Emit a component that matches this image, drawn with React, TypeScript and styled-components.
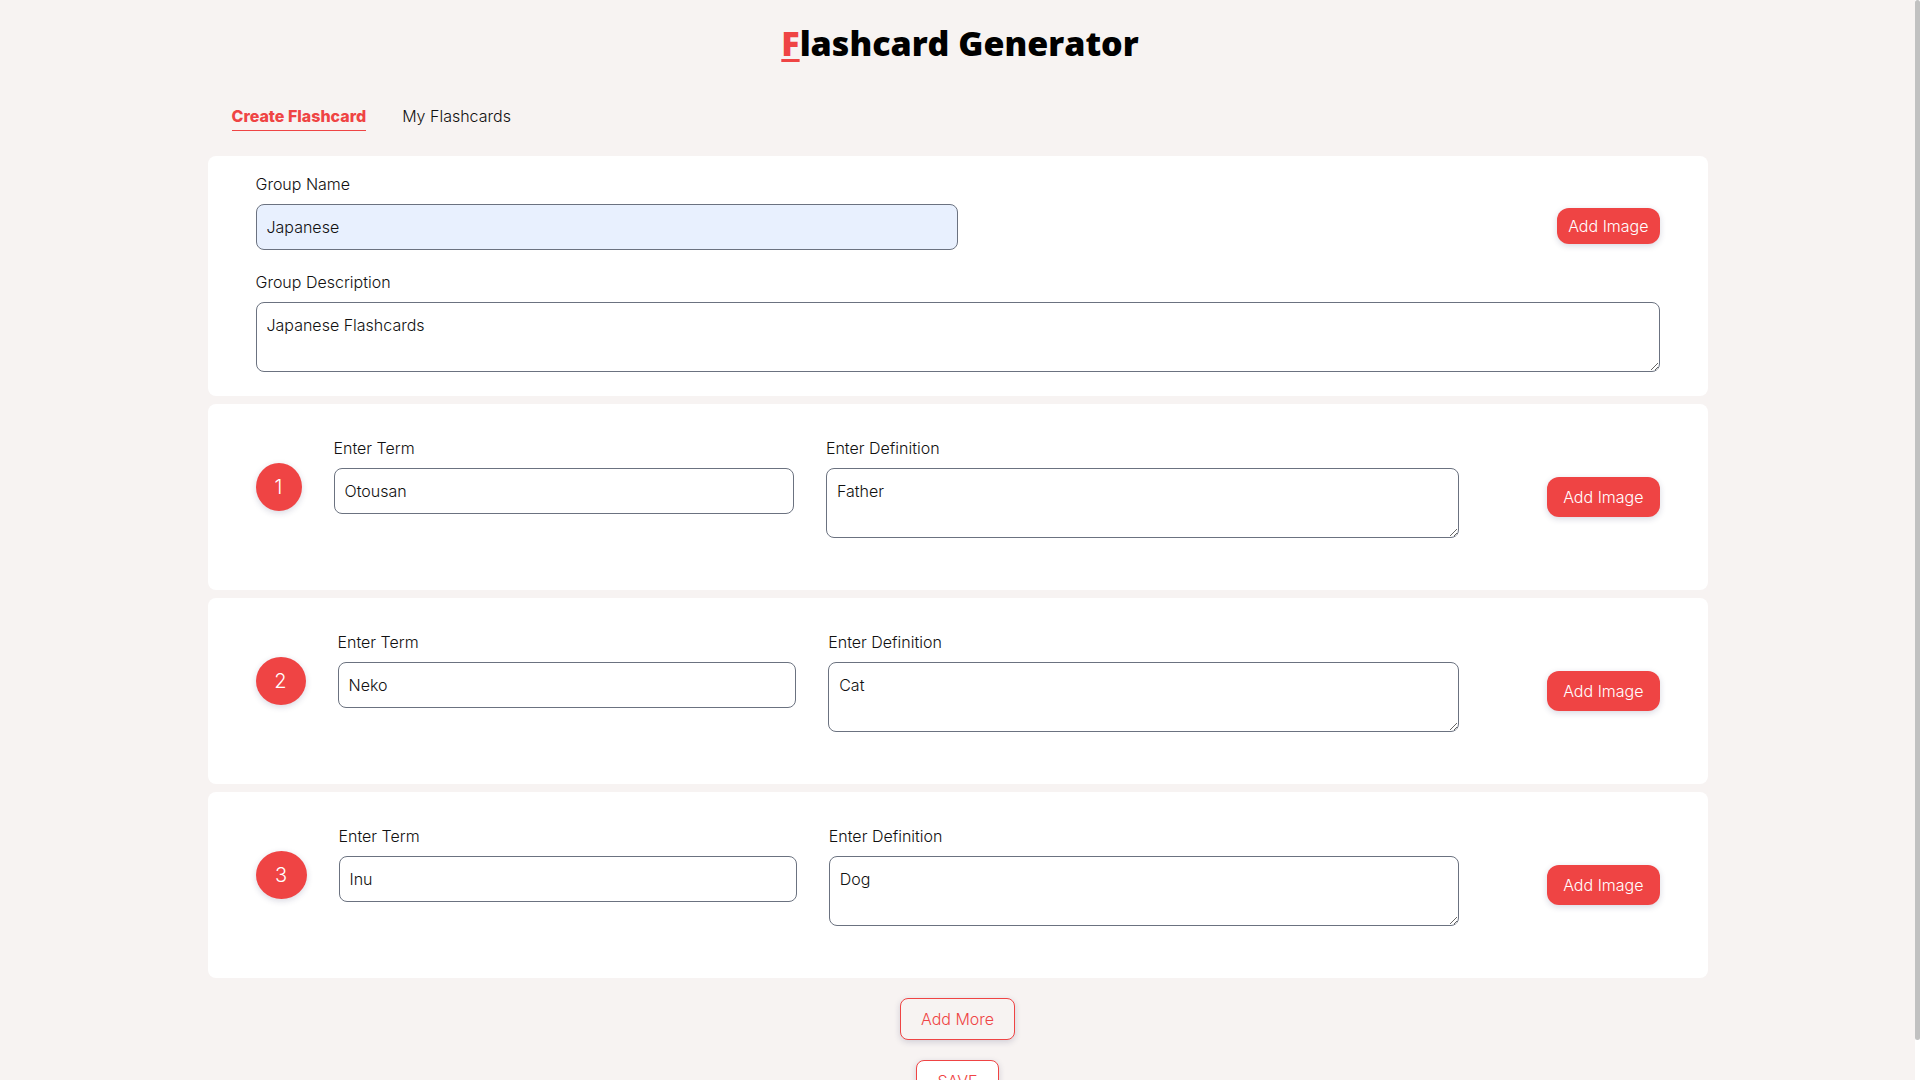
import React, { useEffect, useState } from "react";
import styled, { createGlobalStyle } from "styled-components";

const red = "#ef4444";
const softShadow = "0 2px 6px rgba(40, 40, 90, 0.18)";

const GlobalStyle = createGlobalStyle`
  *, *::before, *::after { box-sizing: border-box; }
  html { scrollbar-width: none; }
  body {
    margin: 0;
    background: #f7f3f2;
    color: #111;
    font: 300 16px/24px Inter, "Liberation Sans", sans-serif;
    font-variation-settings: "opsz" 32;
  }
  button, input, textarea {
    font: inherit;
    font-variation-settings: inherit;
    color: inherit;
    margin: 0;
  }
`;

const ScrollTrack = styled.div`
  position: fixed;
  top: 0;
  right: 0;
  bottom: 0;
  width: 5px;
  background: #fff;
`;

const ScrollThumb = styled.div`
  border-radius: 4px;
  background: #c1c1c1;
`;

const Header = styled.header`
  padding-top: 24px;
`;

const Content = styled.div`
  padding-right: 5px;
`;

const Page = styled.main`
  max-width: 1500px;
  margin: 0 auto;
  padding-bottom: 20px;
`;

const Title = styled.h1`
  margin: 0 0 42px;
  color: #000;
  text-align: center;
  font: 800 34px/38px "Open Sans", "Noto Sans", sans-serif;
`;

const Initial = styled.span`
  color: ${red};
  text-decoration: underline;
  text-decoration-thickness: 3px;
  text-underline-offset: 3px;
`;

const Tabs = styled.nav`
  display: flex;
  gap: 36px;
  padding: 0 24px;
  margin-bottom: 25px;
`;

const Tab = styled.a<{ $active?: boolean }>`
  padding-bottom: 2px;
  border-bottom: 1px solid ${(p) => (p.$active ? red : "transparent")};
  color: ${(p) => (p.$active ? red : "inherit")};
  font-weight: ${(p) => (p.$active ? 800 : 300)};
  text-decoration: none;
`;

const Form = styled.form`
  display: flex;
  flex-direction: column;
  gap: 8px;
`;

const GroupCard = styled.section`
  display: flex;
  flex-direction: column;
  gap: 20px;
  padding: 16px 48px 24px;
  border-radius: 8px;
  background: #fff;
`;

const GroupRow = styled.div`
  display: flex;
  align-items: flex-end;
  justify-content: space-between;
`;

const ImageSlot = styled.div`
  display: flex;
  align-items: center;
  height: 48px;
`;

const TermCard = styled.section`
  display: flex;
  align-items: center;
  justify-content: space-between;
  padding: 32px 48px;
  border-radius: 8px;
  background: #fff;
`;

const TermFields = styled.div`
  display: flex;
  gap: 32px;
  width: calc(100% * 6 / 7);
  margin-bottom: 20px;
`;

const Badge = styled.div<{ $width: number }>`
  display: flex;
  flex: none;
  align-items: center;
  justify-content: center;
  align-self: center;
  width: ${(p) => p.$width}px;
  height: 48px;
  border-radius: 50%;
  background: ${red};
  color: #fff;
  font-size: 20px;
  box-shadow: ${softShadow};
`;

const Field = styled.div<{ $grow?: number; $half?: boolean }>`
  display: flex;
  flex-direction: column;
  gap: 8px;
  min-width: 0;
  ${(p) => (p.$grow ? `flex: ${p.$grow} 1 0;` : "")}
  ${(p) => (p.$half ? "width: 50%;" : "")}
`;

const Label = styled.label`
  display: block;
`;

const TextInput = styled.input<{ $filled?: boolean }>`
  width: 100%;
  padding: 10px;
  border: 1px solid #6b7280;
  border-radius: 8px;
  outline: none;
  background: ${(p) => (p.$filled ? "#e8f0fe" : "#fff")};
`;

const TextArea = styled.textarea`
  display: block;
  width: 100%;
  height: 70px;
  padding: 10px;
  border: 1px solid #6b7280;
  border-radius: 8px;
  outline: none;
  background: #fff;
`;

const ImageButton = styled.button<{ $large?: boolean }>`
  padding: ${(p) => (p.$large ? "8px 16px" : "6px 11px")};
  border: 0;
  border-radius: 12px;
  background: ${red};
  color: #fff;
  white-space: nowrap;
  box-shadow: ${softShadow};
  cursor: pointer;
`;

const Actions = styled.div`
  display: flex;
  flex-direction: column;
  align-items: center;
  gap: 20px;
  margin-top: 12px;
`;

const OutlineButton = styled.button<{ $solid?: boolean }>`
  padding: 8px 20px;
  border: 1px solid ${red};
  border-radius: 8px;
  background: ${(p) => (p.$solid ? "#fff" : "#f7f3f2")};
  color: ${red};
  box-shadow: ${softShadow};
  cursor: pointer;
`;

const terms = [
  { term: "Otousan", definition: "Father", badge: 46 },
  { term: "Neko", definition: "Cat", badge: 50 },
  { term: "Inu", definition: "Dog", badge: 51 },
];

function PageScrollbar() {
  const [thumb, setThumb] = useState({ top: 0, height: 0 });

  useEffect(() => {
    const measure = () => {
      const { clientHeight, scrollHeight, scrollTop } = document.documentElement;
      const ratio = clientHeight / scrollHeight;
      setThumb({ top: scrollTop * ratio, height: clientHeight * ratio });
    };
    measure();
    window.addEventListener("scroll", measure);
    window.addEventListener("resize", measure);
    return () => {
      window.removeEventListener("scroll", measure);
      window.removeEventListener("resize", measure);
    };
  }, []);

  return (
    <ScrollTrack aria-hidden="true">
      <ScrollThumb style={{ height: thumb.height, marginTop: thumb.top }} />
    </ScrollTrack>
  );
}

export default function App() {
  return (
    <>
      <GlobalStyle />
      <Header>
        <Title>
          <Initial>F</Initial>lashcard Generator
        </Title>
      </Header>
      <Content>
        <Page>
          <Tabs>
            <Tab href="#create" $active>Create Flashcard</Tab>
            <Tab href="#mine">My Flashcards</Tab>
          </Tabs>
          <Form onSubmit={(e) => e.preventDefault()}>
            <GroupCard>
              <GroupRow>
                <Field $half>
                  <Label htmlFor="group-name">Group Name</Label>
                  <TextInput id="group-name" $filled defaultValue="Japanese" />
                </Field>
                <ImageSlot>
                  <ImageButton type="button">Add Image</ImageButton>
                </ImageSlot>
              </GroupRow>
              <Field>
                <Label htmlFor="group-description">Group Description</Label>
                <TextArea id="group-description" defaultValue="Japanese Flashcards" />
              </Field>
            </GroupCard>
            {terms.map((t, i) => (
              <TermCard key={t.term}>
                <TermFields>
                  <Badge $width={t.badge}>{i + 1}</Badge>
                  <Field $grow={8}>
                    <Label htmlFor={`term-${i}`}>Enter Term</Label>
                    <TextInput id={`term-${i}`} defaultValue={t.term} />
                  </Field>
                  <Field $grow={11}>
                    <Label htmlFor={`definition-${i}`}>Enter Definition</Label>
                    <TextArea id={`definition-${i}`} defaultValue={t.definition} />
                  </Field>
                </TermFields>
                <ImageButton type="button" $large>Add Image</ImageButton>
              </TermCard>
            ))}
            <Actions>
              <OutlineButton type="button">Add More</OutlineButton>
              <OutlineButton type="submit" $solid>SAVE</OutlineButton>
            </Actions>
          </Form>
        </Page>
      </Content>
      <PageScrollbar />
    </>
  );
}
